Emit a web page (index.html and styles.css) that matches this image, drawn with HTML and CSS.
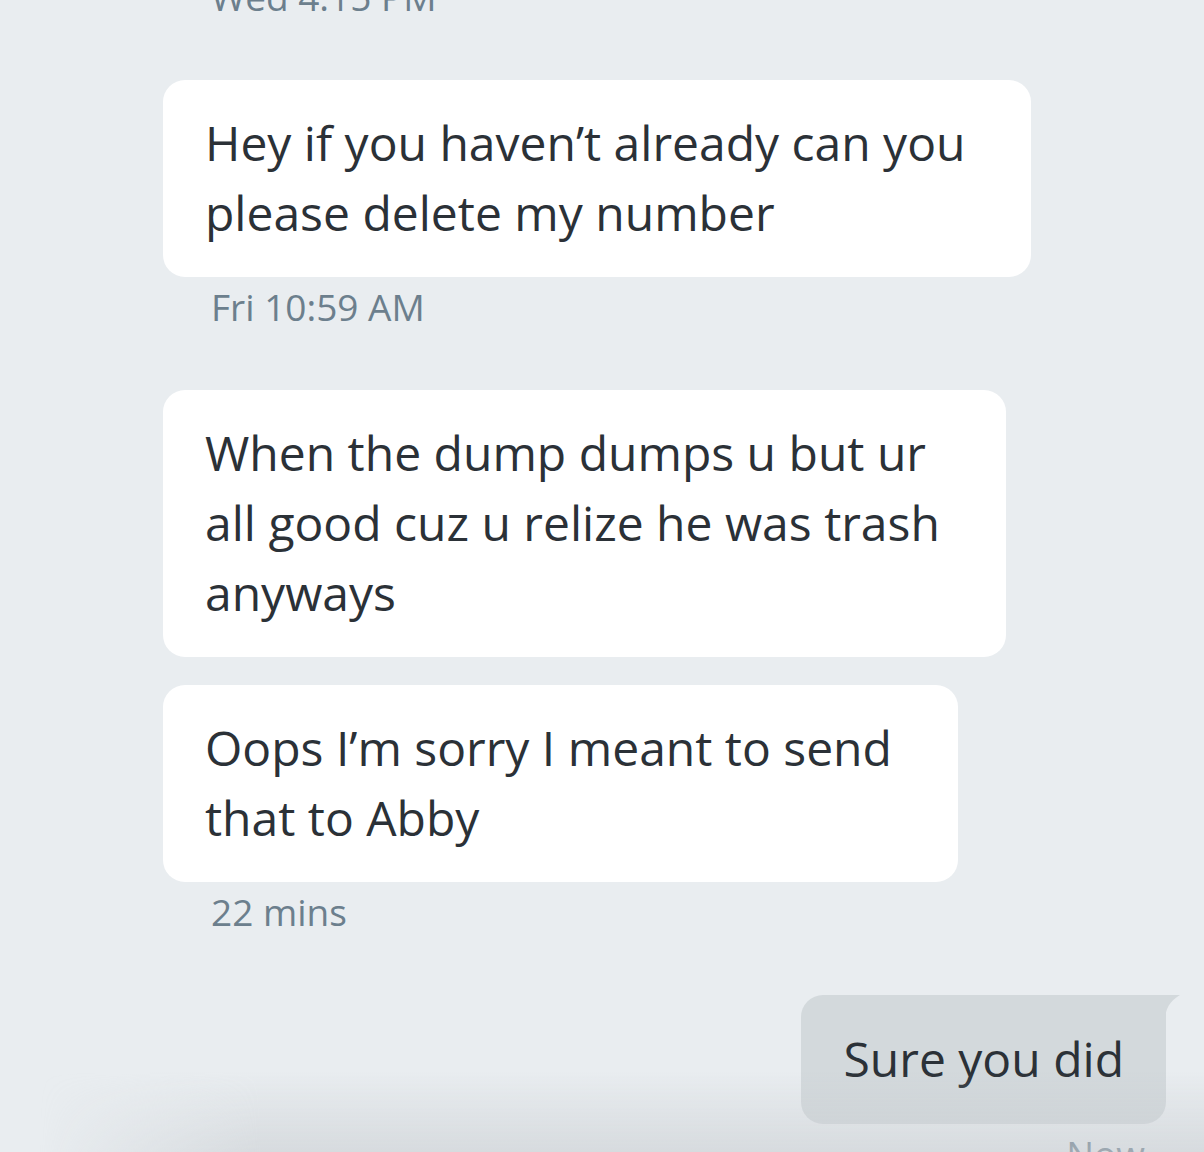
FILE: index.html
```html
<!DOCTYPE html>
<html lang="en">
<head>
    <meta charset="UTF-8">
    <title>Messages</title>
    <link rel="stylesheet" href="styles.css">
</head>
<body>
    <main class="thread">
        <p class="stamp">Wed 4:15 PM</p>

        <div class="group">
            <div class="bubble in">Hey if you haven’t already can you<br>please delete my number</div>
            <p class="stamp">Fri 10:59 AM</p>
        </div>

        <div class="group">
            <div class="bubble in">When the dump dumps u but ur<br>all good cuz u relize he was trash<br>anyways</div>
            <div class="bubble in">Oops I’m sorry I meant to send<br>that to Abby</div>
            <p class="stamp">22 mins</p>
        </div>

        <div class="group out">
            <div class="bubble mine">
                Sure you did
                <svg class="tail" width="15" height="24" viewBox="0 0 15 24"><path d="M0 0 H15 C9 4 1 9 0 24 Z" fill="#d3d9dc"/></svg>
            </div>
            <p class="stamp">Now</p>
        </div>
    </main>
    <div class="shade"></div>
</body>
</html>
```

FILE: styles.css
```css
body {
    margin: 0;
    background: #e9edf0;
    font-family: "Open Sans", "Noto Sans", sans-serif;
    overflow: hidden;
    height: 1152px;
}
.thread {
    display: flex;
    flex-direction: column;
    padding: 0 38px 0 163px;
    margin-top: -25px;
}
.stamp {
    margin: 8px 0 0;
    padding-left: 48px;
    font-size: 37px;
    line-height: 44px;
    color: #6c7f8d;
}
.thread > .stamp {
    margin-top: 0;
}
.group {
    display: flex;
    flex-direction: column;
    align-items: flex-start;
    gap: 28px;
    margin-top: 61px;
}
.group .stamp {
    margin-top: -20px;
}
.bubble {
    position: relative;
    font-size: 48px;
    line-height: 70px;
    color: #2b3137;
    padding: 28px 66px 29px 42px;
    border-radius: 22px;
}
.in {
    background: #fff;
}
.out {
    align-items: flex-end;
}
.mine {
    background: #d3d9dc;
    border-top-right-radius: 0;
    padding: 29px 42px 30px 43px;
}
.tail {
    position: absolute;
    top: 0;
    right: -14px;
}
.out .stamp {
    padding-left: 0;
    margin-right: 21px;
}
.shade {
    position: fixed;
    left: 0;
    right: 0;
    bottom: 0;
    height: 80px;
    background: linear-gradient(to bottom, rgba(200, 204, 208, 0), rgba(200, 204, 208, 0.55));
    -webkit-mask-image: linear-gradient(to right, transparent 40px, #000 260px);
    mask-image: linear-gradient(to right, transparent 40px, #000 260px);
    pointer-events: none;
}
```
